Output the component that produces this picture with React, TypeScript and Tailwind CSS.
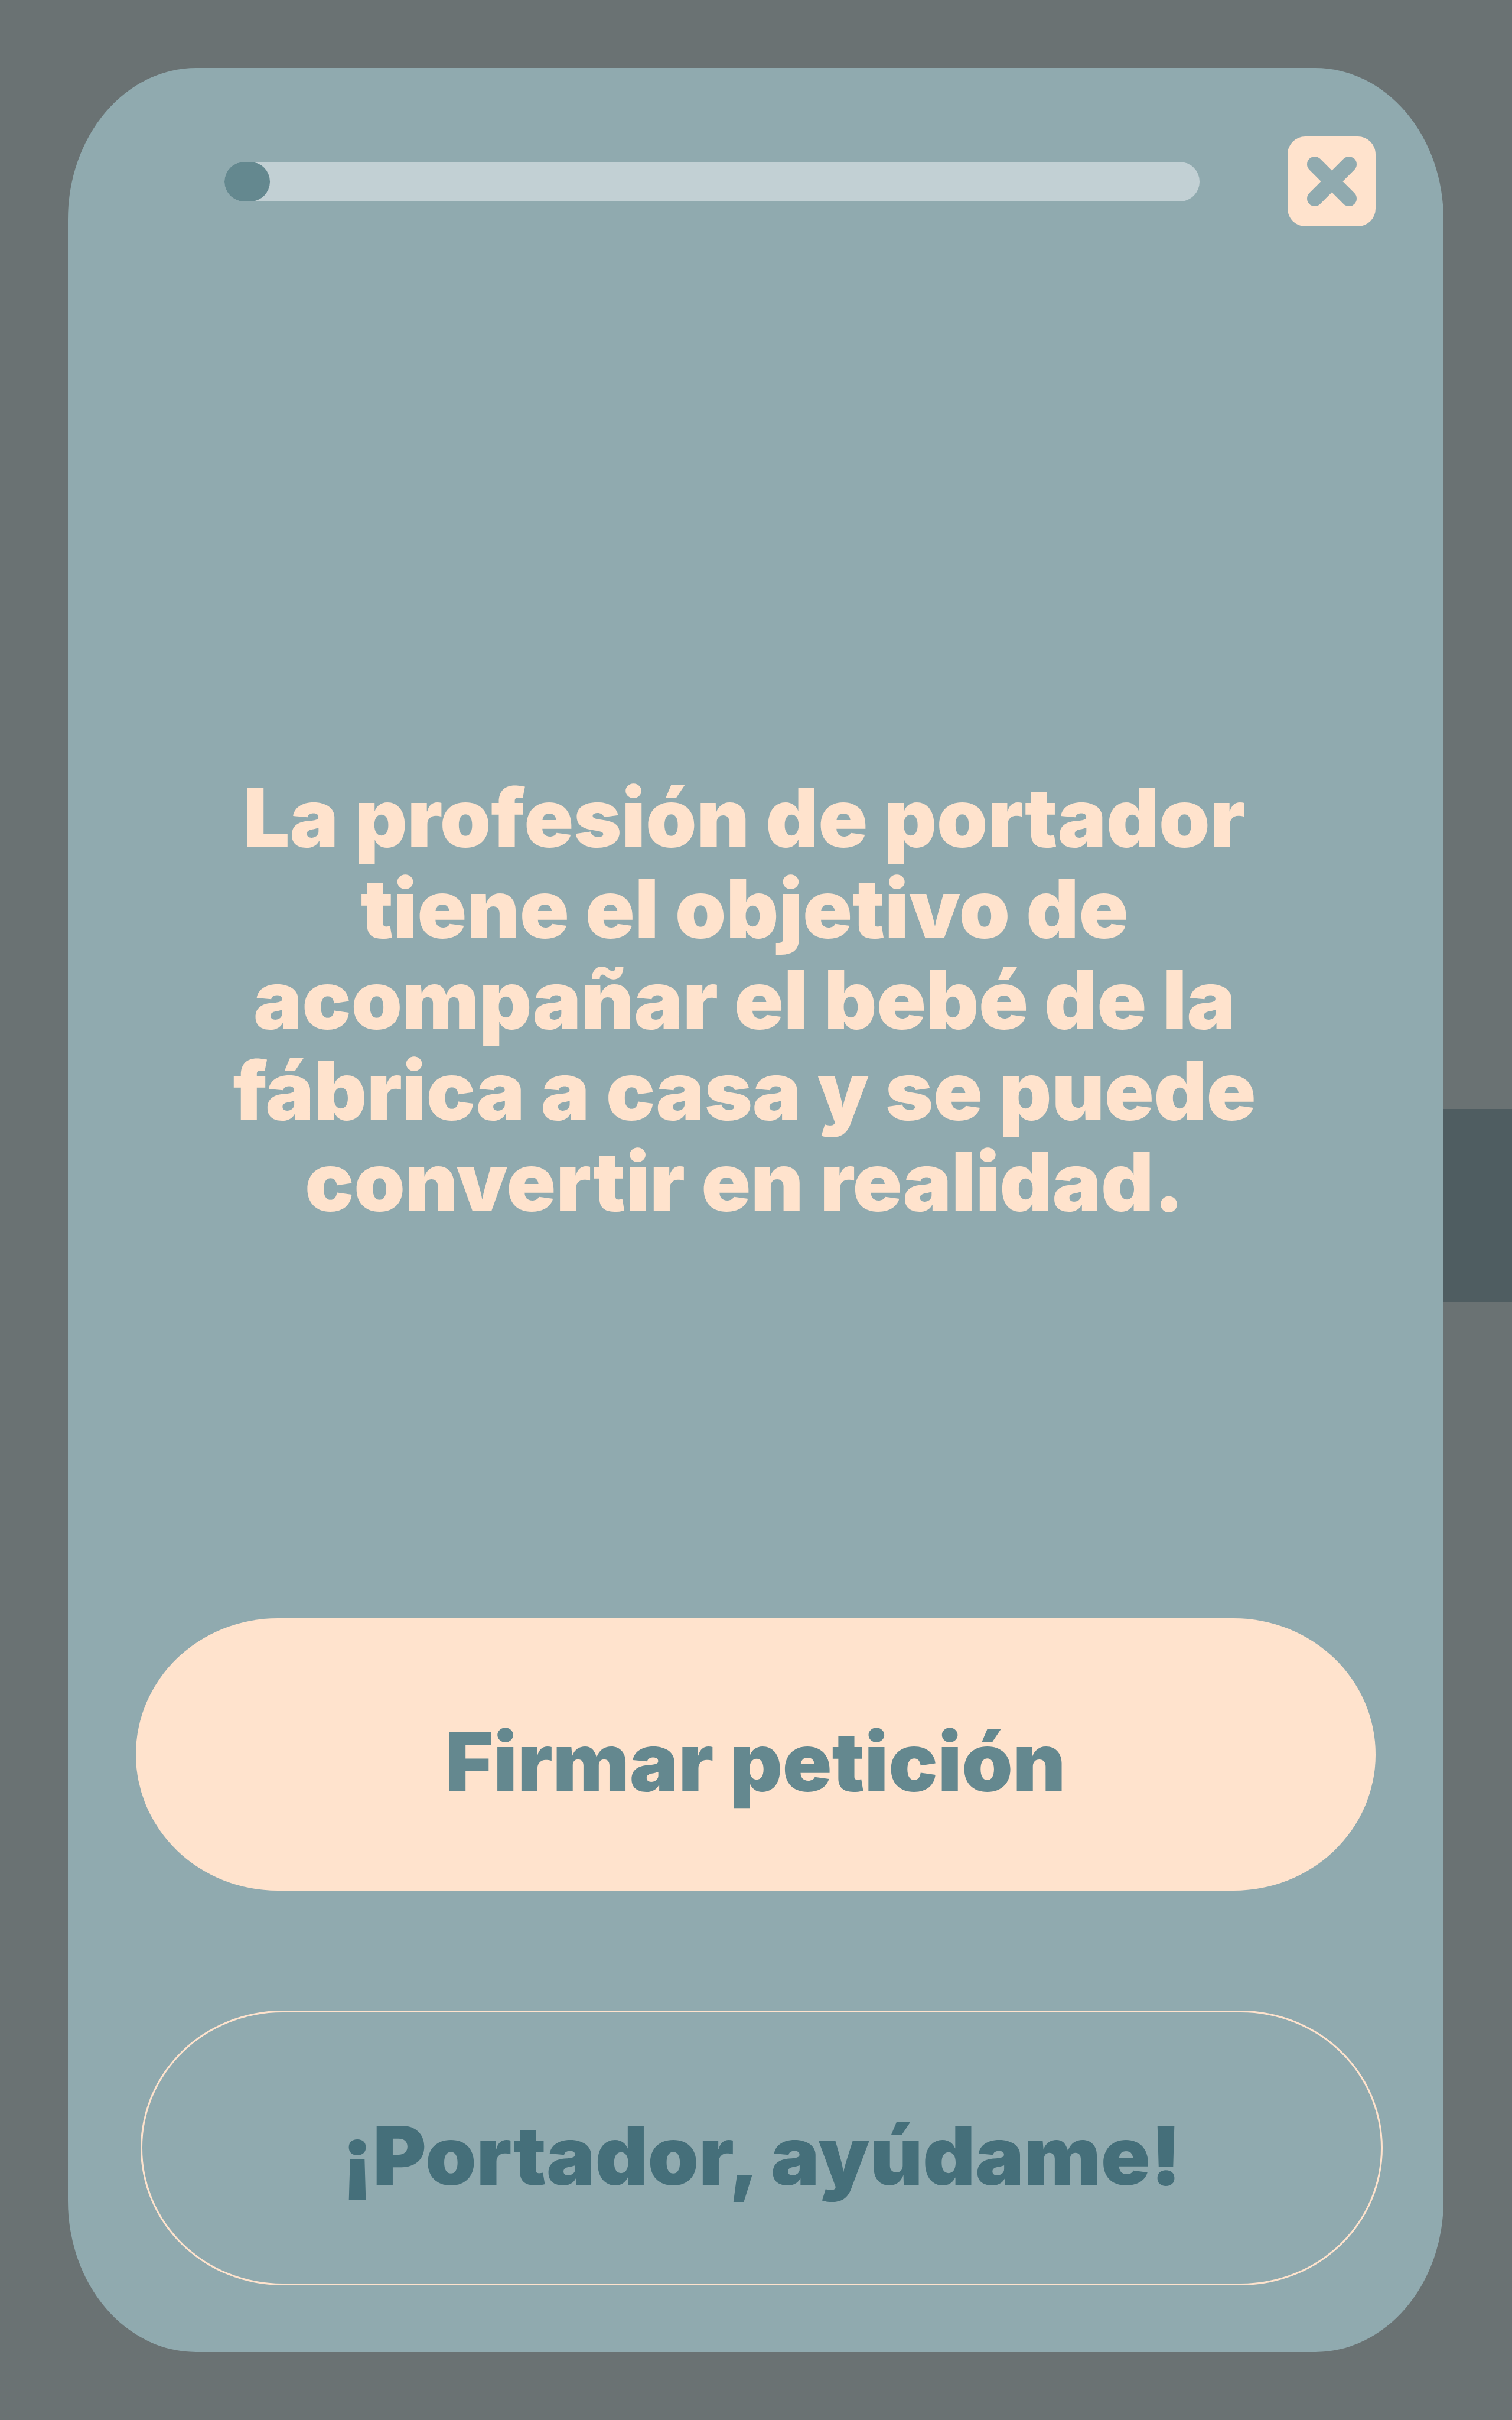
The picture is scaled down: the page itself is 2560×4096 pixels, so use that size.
import React from "react";

function ProgressBar({ value }: { value: number }) {
  return (
    <div
      role="progressbar"
      aria-label="Progreso"
      aria-valuemin={0}
      aria-valuemax={100}
      aria-valuenow={value}
      className="h-[67px] flex-1 rounded-full bg-[#c2d0d4]"
    >
      <div className="h-full min-w-[77px] rounded-full bg-[#64888f]" style={{ width: `${value}%` }} />
    </div>
  );
}

function CloseButton() {
  return (
    <button
      type="button"
      aria-label="Cerrar"
      className="flex h-[152px] w-[149px] shrink-0 items-center justify-center rounded-[30px] bg-[#ffe3cd] text-[#90aaaf]"
    >
      <svg viewBox="0 0 84 84" className="size-[84px]" fill="none" stroke="currentColor" strokeWidth="26" strokeLinecap="round">
        <path d="M13 13 71 71M71 13 13 71" />
      </svg>
    </button>
  );
}

export default function App() {
  return (
    <div className="flex min-h-screen bg-[#6a7273] pl-[115px] font-['Inter',sans-serif] text-[138px] leading-[154px] font-black">
      <section
        role="dialog"
        aria-label="La profesión de portador"
        className="my-[115px] flex flex-1 flex-col rounded-[217px/256px] bg-[#90aaaf] px-[115px] pt-[116px] pb-[113px]"
      >
        <header className="flex items-center gap-[149px] pl-[150px]">
          <ProgressBar value={4} />
          <CloseButton />
        </header>

        <main className="flex flex-1 flex-col items-center justify-center pt-[262px] pr-[38px]">
          <p className="text-center whitespace-nowrap text-[#ffe3cd]">
            La profesión de portador
            <br />
            tiene el objetivo de
            <br />
            acompañar el bebé de la
            <br />
            fábrica a casa y se puede
            <br />
            convertir en realidad.
          </p>
        </main>

        <footer className="flex flex-col gap-[203px]">
          <button
            type="button"
            className="h-[461px] rounded-[240px/230px] bg-[#ffe3cd] pt-6 text-[#64888f]"
          >
            Firmar petición
          </button>
          <button
            type="button"
            className="-mr-3 ml-2 h-[465px] rounded-[240px/232px] border-3 border-[#ffe3cd] pt-6 text-[#456f7a]"
          >
            ¡Portador, ayúdame!
          </button>
        </footer>
      </section>

      <div className="mt-[1877px] h-[326px] w-[116px] shrink-0 bg-[#4f5d61]" />
    </div>
  );
}
